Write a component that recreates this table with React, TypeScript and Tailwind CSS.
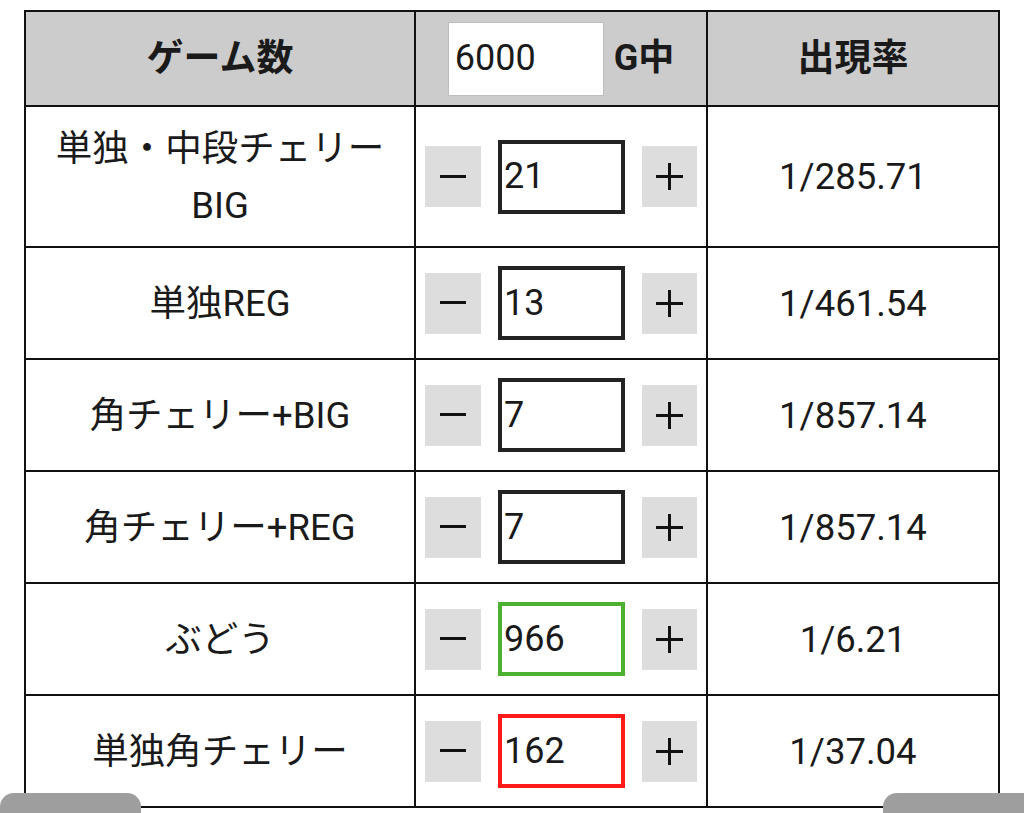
import React from "react";

const rows = [
  { label: ["単独・中段チェリー", "BIG"], value: "21", rate: "1/285.71", border: "border-[#222222]" },
  { label: ["単独REG"], value: "13", rate: "1/461.54", border: "border-[#222222]" },
  { label: ["角チェリー+BIG"], value: "7", rate: "1/857.14", border: "border-[#222222]" },
  { label: ["角チェリー+REG"], value: "7", rate: "1/857.14", border: "border-[#222222]" },
  { label: ["ぶどう"], value: "966", rate: "1/6.21", border: "border-[#4cb030]" },
  { label: ["単独角チェリー"], value: "162", rate: "1/37.04", border: "border-[#ff1a1a]" },
];

export default function App() {
  return (
    <div
      className="relative w-[1024px] h-[813px] overflow-hidden bg-white text-[#1a1a1a]"
      style={{ fontFamily: "Roboto, 'Noto Sans CJK JP', sans-serif" }}
    >
      <div className="pt-[10px] pl-[24px]">
        <table className="table-fixed border-collapse w-[976px] text-[36.5px] leading-[57px]">
          <thead>
            <tr className="h-[95px] bg-[#cccccc]">
              <th className="w-[390px] border-2 border-[#111] font-bold text-center text-[37px]">ゲーム数</th>
              <th className="w-[292px] border-2 border-[#111] font-bold">
                <div className="flex items-center justify-center gap-[10px]">
                  <div className="w-[156px] h-[74px] bg-white border border-[#bdbdbd] flex items-center pl-[6px] font-normal text-[36px]">
                    6000
                  </div>
                  <span className="text-[36px]">G中</span>
                </div>
              </th>
              <th className="w-[292px] border-2 border-[#111] font-bold text-center text-[37px]">出現率</th>
            </tr>
          </thead>
          <tbody>
            {rows.map((r, i) => (
              <tr key={i} className={i === 0 ? "h-[141px]" : "h-[112px]"}>
                <td className="border-2 border-[#111] text-center">
                  {r.label.map((l, j) => (
                    <div key={j}>{l}</div>
                  ))}
                </td>
                <td className="border-2 border-[#111]">
                  <div className="flex items-center justify-center gap-[17px]">
                    <div className="w-[56px] h-[61px] bg-[#dddddd] flex items-center justify-center">
                      <svg width="26" height="4" viewBox="0 0 26 4">
                        <rect x="0" y="0" width="26" height="3" fill="#111" />
                      </svg>
                    </div>
                    <div
                      className={`w-[127px] h-[74px] bg-white border-[4px] ${r.border} flex items-center pl-[2px] text-[36px] text-[#1a1a1a]`}
                    >
                      {r.value}
                    </div>
                    <div className="w-[55px] h-[61px] bg-[#dddddd] flex items-center justify-center">
                      <svg width="27" height="27" viewBox="0 0 27 27">
                        <rect x="0" y="12" width="27" height="3" fill="#111" />
                        <rect x="12" y="0" width="3" height="27" fill="#111" />
                      </svg>
                    </div>
                  </div>
                </td>
                <td className="border-2 border-[#111] text-center">{r.rate}</td>
              </tr>
            ))}
          </tbody>
        </table>
      </div>
      <div className="absolute left-0 top-[793px] w-[141px] h-[30px] rounded-t-[14px] bg-[#9e9e9e]" />
      <div className="absolute left-[883px] top-[793px] w-[160px] h-[30px] rounded-tl-[14px] bg-[#9e9e9e]" />
    </div>
  );
}
